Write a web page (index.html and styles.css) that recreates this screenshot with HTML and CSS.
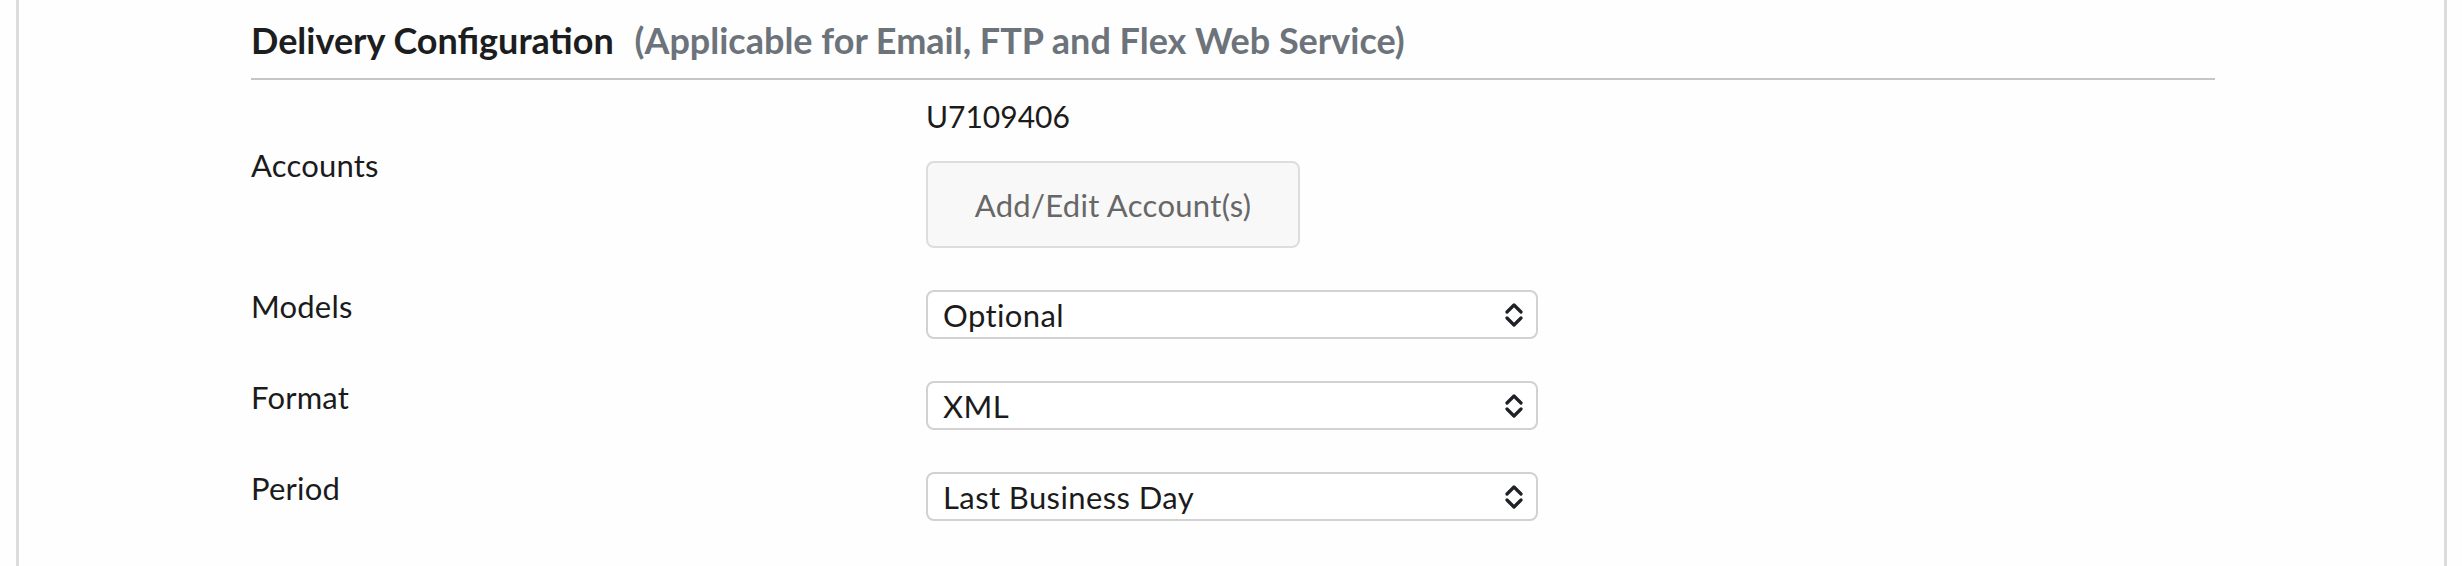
FILE: index.html
```html
<!DOCTYPE html>
<html lang="en">
<head>
<meta charset="utf-8">
<title>Delivery Configuration</title>
<link rel="stylesheet" href="styles.css">
</head>
<body>
<div class="panel">
  <section class="section">
    <h2 class="title">Delivery Configuration <span class="sub">(Applicable for Email, FTP and Flex Web Service)</span></h2>
    <div class="form">
      <div class="row row-accounts">
        <div class="label label-center">Accounts</div>
        <div class="field">
          <div class="acct">U7109406</div>
          <button class="btn" type="button">Add/Edit Account(s)</button>
        </div>
      </div>
      <div class="row">
        <div class="label">Models</div>
        <div class="field">
          <div class="select"><span>Optional</span>
            <svg class="chev" viewBox="0 0 18 24" width="18" height="24"><path d="M2 9 L9 2 L16 9 M2 15 L9 22 L16 15" fill="none" stroke="#1e2125" stroke-width="3.2" stroke-linecap="round" stroke-linejoin="round"/></svg>
          </div>
        </div>
      </div>
      <div class="row">
        <div class="label">Format</div>
        <div class="field">
          <div class="select"><span>XML</span>
            <svg class="chev" viewBox="0 0 18 24" width="18" height="24"><path d="M2 9 L9 2 L16 9 M2 15 L9 22 L16 15" fill="none" stroke="#1e2125" stroke-width="3.2" stroke-linecap="round" stroke-linejoin="round"/></svg>
          </div>
        </div>
      </div>
      <div class="row">
        <div class="label">Period</div>
        <div class="field">
          <div class="select"><span>Last Business Day</span>
            <svg class="chev" viewBox="0 0 18 24" width="18" height="24"><path d="M2 9 L9 2 L16 9 M2 15 L9 22 L16 15" fill="none" stroke="#1e2125" stroke-width="3.2" stroke-linecap="round" stroke-linejoin="round"/></svg>
          </div>
        </div>
      </div>
    </div>
  </section>
</div>
</body>
</html>
```

FILE: styles.css
```css
html, body {
  margin: 0;
  padding: 0;
  background: #fefefe;
}
body {
  font-family: Lato, "Liberation Sans", sans-serif;
  color: #1b1b1b;
}
.panel {
  margin: 0 15px 0 16px;
  border-left: 3px solid #dcdcdc;
  border-right: 3px solid #dcdcdc;
  min-height: 566px;
  box-sizing: border-box;
  padding: 0 229px 0 232px;
}
.section {
  padding-top: 18px;
}
.title {
  margin: 0;
  font-size: 36px;
  font-weight: 700;
  line-height: 44px;
  color: #1c1d1f;
  padding-bottom: 16px;
  border-bottom: 2px solid #c6c6c6;
}
.sub {
  color: #6c737a;
  margin-left: 12px;
}
.form {
  display: flex;
  flex-direction: column;
  gap: 42px;
  padding-top: 16px;
}
.row {
  display: grid;
  grid-template-columns: 675px 612px;
  align-items: start;
}
.row-accounts {
  align-items: center;
}
.label {
  font-size: 31px;
  line-height: 40px;
  letter-spacing: 0.2px;
  margin-top: -4px;
}
.label-center {
  margin-top: 0;
  margin-bottom: 14px;
}
.field {
  display: flex;
  flex-direction: column;
  align-items: flex-start;
}
.acct {
  font-size: 30px;
  line-height: 40px;
}
.btn {
  margin-top: 25px;
  width: 374px;
  height: 87px;
  font-family: inherit;
  font-size: 31px;
  letter-spacing: 0.3px;
  color: #676767;
  background: #f8f8f8;
  border: 2px solid #dddddd;
  border-radius: 8px;
  padding: 0;
}
.select {
  box-sizing: border-box;
  width: 612px;
  height: 49px;
  border: 2px solid #d2d2d2;
  border-radius: 8px;
  background: #ffffff;
  display: flex;
  align-items: center;
  justify-content: space-between;
  padding: 0 13px 0 15px;
  font-size: 31px;
  line-height: 40px;
  letter-spacing: 0.4px;
}
.chev {
  display: block;
}
```
